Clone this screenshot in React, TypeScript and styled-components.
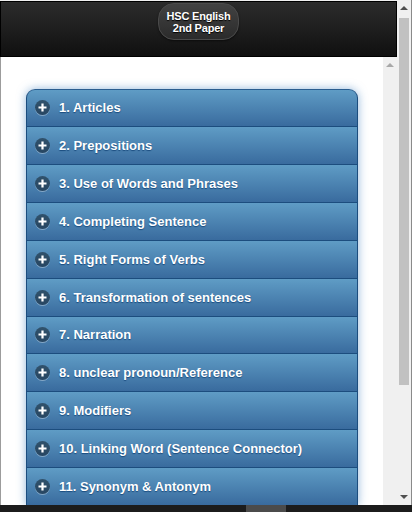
import React from 'react';
import styled, { createGlobalStyle } from 'styled-components';

const GlobalStyle = createGlobalStyle`
  html, body {
    margin: 0;
    padding: 0;
    background: #f0f0f0;
  }
  * {
    box-sizing: border-box;
  }
`;

const topics = [
  '1. Articles',
  '2. Prepositions',
  '3. Use of Words and Phrases',
  '4. Completing Sentence',
  '5. Right Forms of Verbs',
  '6. Transformation of sentences',
  '7. Narration',
  '8. unclear pronoun/Reference',
  '9. Modifiers',
  '10. Linking Word (Sentence Connector)',
  '11. Synonym & Antonym',
];

const Page = styled.div`
  width: 412px;
  height: 512px;
  display: flex;
  flex-direction: column;
  overflow: hidden;
  font-family: 'Liberation Sans', Arial, Helvetica, sans-serif;
`;

const Main = styled.div`
  flex: 1;
  display: flex;
  min-height: 0;
`;

const Screen = styled.div`
  width: 397px;
  display: flex;
  flex-direction: column;
  padding-top: 1px;
  background: #f0f0f0;
`;

const Header = styled.header`
  height: 56px;
  border: 1px solid #000;
  background: linear-gradient(#2c2c2c, #101010);
  display: flex;
  justify-content: center;
  align-items: flex-start;
  padding-top: 1px;
`;

const TitlePill = styled.div`
  width: 81px;
  height: 37px;
  border-radius: 16px;
  border: 1px solid #4a4a4a;
  background: linear-gradient(#424242, #2b2b2b);
  box-shadow: 0 1px 2px rgba(0, 0, 0, 0.5);
  color: #fff;
  font-weight: bold;
  font-size: 11px;
  line-height: 12px;
  letter-spacing: -0.2px;
  text-align: center;
  display: flex;
  flex-direction: column;
  justify-content: center;
  text-shadow: 0 1px 1px #000;
`;

const Body = styled.div`
  flex: 1;
  display: flex;
  min-height: 0;
`;

const Content = styled.div`
  flex: 1;
  background: #fff;
  border-left: 1px solid #9c9c9c;
  padding: 32px 25px 0 25px;
  overflow: hidden;
`;

const List = styled.div`
  border-radius: 9px 9px 0 0;
  box-shadow: 0 0 10px rgba(56, 123, 190, 0.55);
`;

const Row = styled.div<{ $first?: boolean }>`
  height: 37.93px;
  display: flex;
  align-items: center;
  gap: 9px;
  padding-left: 8px;
  border: 1px solid #1c4d7e;
  border-top: ${(p) => (p.$first ? '1px solid #2a5d8f' : 'none')};
  border-radius: ${(p) => (p.$first ? '9px 9px 0 0' : '0')};
  background: linear-gradient(#5f9cc5, #396b9e);
  color: #fff;
  font-weight: bold;
  font-size: 13px;
  text-shadow: 0 1px 1px #194b7e;
  white-space: nowrap;
`;

const PlusIcon = styled.span`
  width: 15px;
  height: 15px;
  flex: none;
  border-radius: 50%;
  background: rgba(0, 0, 0, 0.42);
  box-shadow: 0 1px 0 rgba(255, 255, 255, 0.35);
  display: flex;
  align-items: center;
  justify-content: center;
`;

const InnerScroll = styled.div`
  width: 14px;
  background: #f0f0f0;
  display: flex;
  justify-content: center;
  padding-top: 6px;
`;

const OuterScroll = styled.div`
  width: 15px;
  background: #f0f0f0;
  border-right: 1px solid #8a8a8a;
  display: flex;
  flex-direction: column;
  align-items: center;
  padding: 6px 1px 6px 0;
`;

const Thumb = styled.div`
  width: 10px;
  height: 367px;
  margin-top: 8px;
  background: #c1c1c1;
`;

const Spacer = styled.div`
  flex: 1;
`;

const Arrow = styled.span<{ $down?: boolean; $color: string }>`
  width: 0;
  height: 0;
  border-left: 4px solid transparent;
  border-right: 4px solid transparent;
  ${(p) =>
    p.$down
      ? `border-top: 4px solid ${p.$color};`
      : `border-bottom: 4px solid ${p.$color};`}
`;

const BottomBar = styled.div`
  height: 7px;
  background: #1c1c1c;
  display: flex;
  justify-content: center;
  padding-left: 120px;
`;

const HomeMark = styled.div`
  width: 40px;
  background: #4b4b4b;
`;

function Plus() {
  return (
    <PlusIcon>
      <svg width="9" height="9" viewBox="0 0 9 9">
        <path d="M4.5 0.5v8M0.5 4.5h8" stroke="#fff" strokeWidth="2.2" />
      </svg>
    </PlusIcon>
  );
}

export default function App() {
  return (
    <>
      <GlobalStyle />
      <Page>
        <Main>
          <Screen>
            <Header>
              <TitlePill>
                <span>HSC English</span>
                <span>2nd Paper</span>
              </TitlePill>
            </Header>
            <Body>
              <Content>
                <List>
                  {topics.map((t, i) => (
                    <Row key={t} $first={i === 0}>
                      <Plus />
                      {t}
                    </Row>
                  ))}
                </List>
              </Content>
              <InnerScroll>
                <Arrow $color="#a8a8a8" />
              </InnerScroll>
            </Body>
          </Screen>
          <OuterScroll>
            <Arrow $color="#505050" />
            <Thumb />
            <Spacer />
            <Arrow $down $color="#505050" />
          </OuterScroll>
        </Main>
        <BottomBar>
          <HomeMark />
        </BottomBar>
      </Page>
    </>
  );
}
